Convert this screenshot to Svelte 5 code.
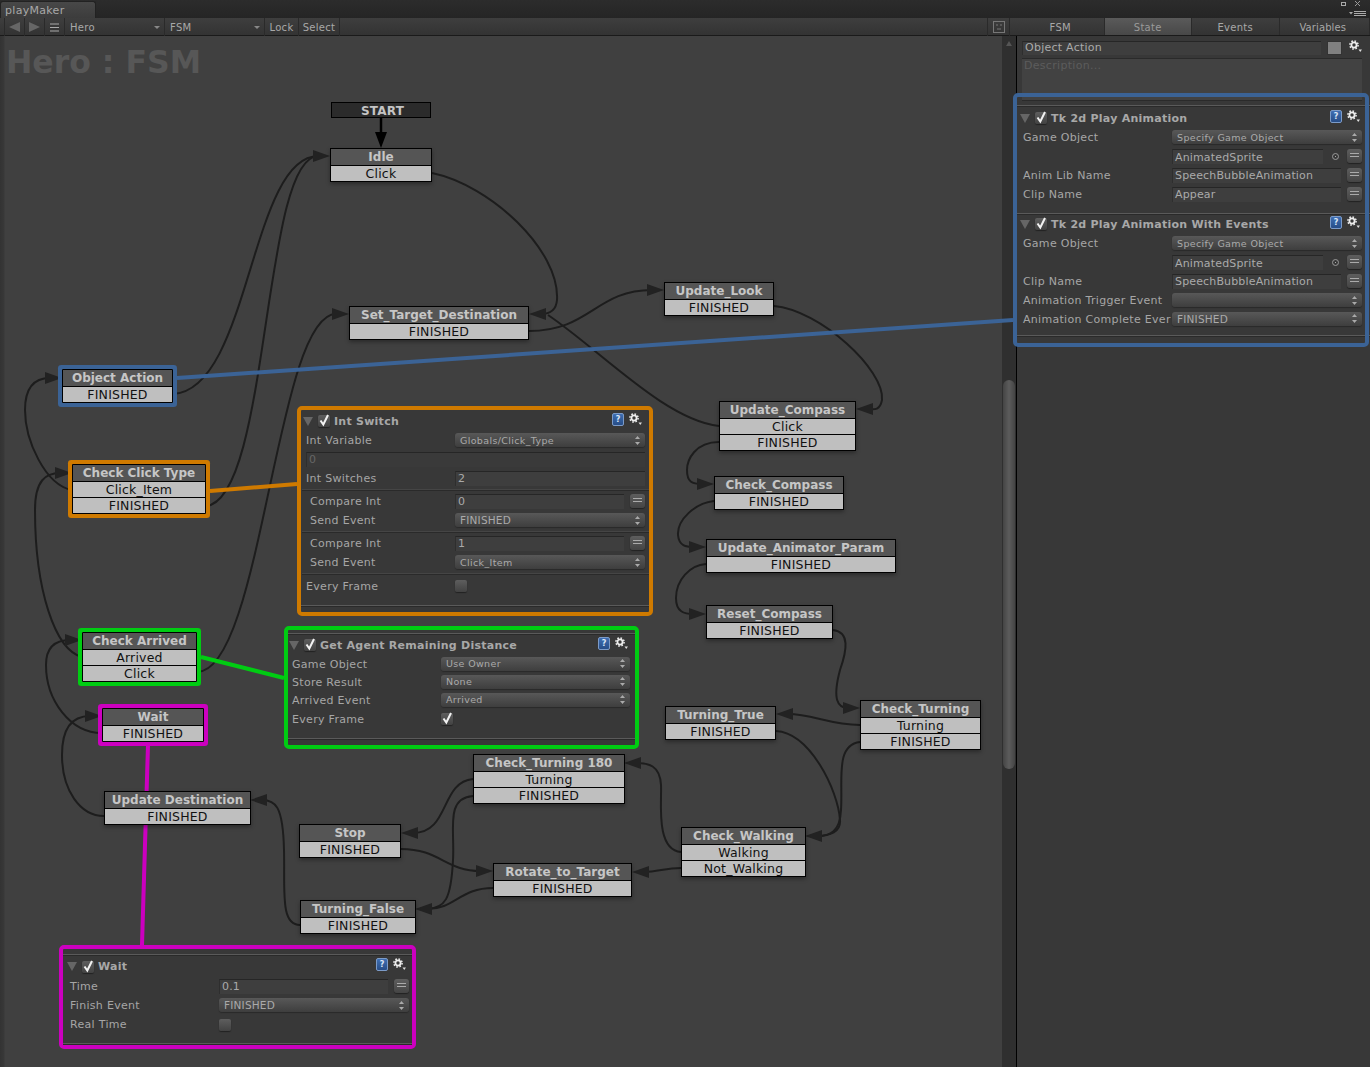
<script>
  const nodes = [
    { n: 'Idle', x: 330, y: 148, w: 102, r: ['Click'] },
    { n: 'Set_Target_Destination', x: 349, y: 306, w: 180, r: ['FINISHED'] },
    { n: 'Update_Look', x: 664, y: 282, w: 110, r: ['FINISHED'] },
    { n: 'Object Action', x: 62, y: 369, w: 111, r: ['FINISHED'], hl: '#3b6396' },
    { n: 'Update_Compass', x: 719, y: 401, w: 137, r: ['Click', 'FINISHED'] },
    { n: 'Check Click Type', x: 72, y: 464, w: 134, r: ['Click_Item', 'FINISHED'], hl: '#cf7a00' },
    { n: 'Check_Compass', x: 714, y: 476, w: 130, r: ['FINISHED'] },
    { n: 'Update_Animator_Param', x: 706, y: 539, w: 190, r: ['FINISHED'] },
    { n: 'Reset_Compass', x: 706, y: 605, w: 127, r: ['FINISHED'] },
    { n: 'Check Arrived', x: 82, y: 632, w: 115, r: ['Arrived', 'Click'], hl: '#00cc12' },
    { n: 'Wait', x: 102, y: 708, w: 102, r: ['FINISHED'], hl: '#cc00c0' },
    { n: 'Update Destination', x: 104, y: 791, w: 147, r: ['FINISHED'] },
    { n: 'Check_Turning 180', x: 473, y: 754, w: 152, r: ['Turning', 'FINISHED'] },
    { n: 'Stop', x: 299, y: 824, w: 102, r: ['FINISHED'] },
    { n: 'Rotate_to_Target', x: 493, y: 863, w: 139, r: ['FINISHED'] },
    { n: 'Turning_False', x: 300, y: 900, w: 116, r: ['FINISHED'] },
    { n: 'Check_Walking', x: 681, y: 827, w: 125, r: ['Walking', 'Not_Walking'] },
    { n: 'Turning_True', x: 665, y: 706, w: 111, r: ['FINISHED'] },
    { n: 'Check_Turning', x: 860, y: 700, w: 121, r: ['Turning', 'FINISHED'] }
  ];

  const curves = [
    'M173 394C250 390 250 157 318 156',
    'M206 506C270 500 262 157 318 156',
    'M197 672C262 672 276 314 336 314',
    'M432 173C490 185 560 250 557 300C556 312 548 314 541 314',
    'M529 331C590 331 596 290 652 290',
    'M719 426C665 420 600 350 548 315',
    'M774 306C820 310 885 370 882 400C880 410 875 410 868 409',
    'M719 442C695 442 687 460 687 470C687 482 692 484 702 484',
    'M714 501C695 503 677 520 678 535C679 546 686 547 694 547',
    'M706 564C690 565 676 580 676 598C676 612 684 614 694 614',
    'M833 630C850 632 847 650 840 670C832 700 838 708 848 708',
    'M860 725C830 725 812 714 788 714',
    'M776 731C810 733 838 790 840 820C841 832 830 836 817 836',
    'M860 742C835 745 843 780 841 810C840 832 830 836 817 836',
    'M681 852C655 850 662 800 661 785C660 765 648 763 636 763',
    'M681 868C665 868 658 872 644 872',
    'M473 779C440 782 450 833 413 833',
    'M473 796C445 798 455 830 453 860C451 900 445 908 427 909',
    'M401 849C440 849 445 871 481 871',
    'M493 888C460 888 455 909 427 909',
    'M300 925C280 925 285 890 284 850C283 805 275 800 262 800',
    'M104 816C80 816 62 790 62 755C62 725 75 716 90 716',
    'M102 733C70 733 46 700 46 665C46 645 58 640 70 640',
    'M82 657C55 650 35 590 35 510C35 480 46 473 60 473',
    'M72 490C45 485 25 440 25 410C25 385 36 378 50 378'
  ];

  // [tip x, tip y, direction]
  const arrows = [
    [330, 156, 1], [349, 314, 1], [529, 314, -1], [664, 290, 1], [856, 409, -1],
    [714, 484, 1], [706, 547, 1], [706, 614, 1], [860, 708, 1], [776, 714, -1],
    [805, 836, -1], [624, 763, -1], [632, 872, -1], [401, 833, -1], [415, 909, -1],
    [493, 871, 1], [250, 800, -1], [102, 716, 1], [82, 640, 1], [72, 473, 1], [62, 378, 1]
  ];
  const arrowPts = (a) => `${a[0]},${a[1]} ${a[0] - a[2] * 17},${a[1] - 6} ${a[0] - a[2] * 17},${a[1] + 6}`;

  const lines = [
    { d: 'M148 745L142 945', c: '#cc00c0' },
    { d: 'M201 657L284 678', c: '#00cc12' },
    { d: 'M210 491L297 484', c: '#cf7a00' },
    { d: 'M177 378L1013 320', c: '#3b6396' }
  ];

  const panels = [
    {
      name: 'Int Switch', x: 297, y: 406, w: 356, h: 210, c: '#cf7a00', pl: 5, pr: 4, hl: 2, gr: 6, top: 1, noTopSep: true,
      rows: [
        { t: 'sel', l: 'Int Variable', v: 'Globals/Click_Type' },
        { t: 'wide', v: '0' },
        { t: 'field', l: 'Int Switches', v: '2' },
        { t: 'sep' },
        { t: 'eq', l: 'Compare Int', v: '0', ind: true },
        { t: 'sel', l: 'Send Event', v: 'FINISHED', ind: true },
        { t: 'sep' },
        { t: 'eq', l: 'Compare Int', v: '1', ind: true },
        { t: 'sel', l: 'Send Event', v: 'Click_Item', ind: true },
        { t: 'sep' },
        { t: 'chk', l: 'Every Frame', on: false, h: 20 }
      ]
    },
    {
      name: 'Get Agent Remaining Distance', x: 284, y: 626, w: 355, h: 123, c: '#00cc12', pl: 4, pr: 5, hl: 1, gr: 6, top: 3,
      rows: [
        { t: 'sel', l: 'Game Object', v: 'Use Owner', h: 18 },
        { t: 'sel', l: 'Store Result', v: 'None', h: 18 },
        { t: 'sel', l: 'Arrived Event', v: 'Arrived', h: 18 },
        { t: 'chk', l: 'Every Frame', on: true, h: 20 }
      ]
    },
    {
      name: 'Wait', x: 59, y: 945, w: 357, h: 104, c: '#cc00c0', pl: 7, pr: 3, hl: 4, gr: 5, top: 5, hh: 21,
      rows: [
        { t: 'eq', l: 'Time', v: '0.1' },
        { t: 'sel', l: 'Finish Event', v: 'FINISHED' },
        { t: 'chk', l: 'Real Time', on: false }
      ]
    }
  ];

  const tk1 = {
    name: 'Tk 2d Play Animation', pl: 6, pr: 8, hl: 3, gr: 9, top: 0,
    rows: [
      { t: 'sel', l: 'Game Object', v: 'Specify Game Object' },
      { t: 'obj', v: 'AnimatedSprite' },
      { t: 'eq', l: 'Anim Lib Name', v: 'SpeechBubbleAnimation' },
      { t: 'eq', l: 'Clip Name', v: 'Appear' }
    ]
  };
  const tk2 = {
    name: 'Tk 2d Play Animation With Events', pl: 6, pr: 8, hl: 3, gr: 9, top: 0,
    rows: [
      { t: 'sel', l: 'Game Object', v: 'Specify Game Object' },
      { t: 'obj', v: 'AnimatedSprite' },
      { t: 'eq', l: 'Clip Name', v: 'SpeechBubbleAnimation' },
      { t: 'sel', l: 'Animation Trigger Event', v: '' },
      { t: 'sel', l: 'Animation Complete Ever', v: 'FINISHED', h: 18 }
    ]
  };
  const isCaps = (v) => v !== '' && v === v.toUpperCase();
</script>

{#snippet gear()}
  <svg class="gear" width="14" height="13" viewBox="0 0 14 13">
    <circle cx="5" cy="5" r="2.6" fill="none" stroke="#eee" stroke-width="1.8" />
    <circle cx="5" cy="5" r="4.1" fill="none" stroke="#eee" stroke-width="1.5" stroke-dasharray="1.6 1.62" />
    <polygon points="9.5,9.5 13,9.5 11.25,12" fill="#ddd" />
  </svg>
{/snippet}

{#snippet tick(on)}
  <span class="check">
    {#if on}
      <svg class="tickmark" width="12" height="13" viewBox="0 0 12 13"><path d="M2.5 6.5L5.3 10.5L10 1" fill="none" stroke="#f2f2f2" stroke-width="2" /></svg>
    {/if}
  </span>
{/snippet}

{#snippet row(r)}
  {#if r.t === 'sep'}
    <div class="sepline small"></div>
  {:else if r.t === 'wide'}
    <div class="row"><span class="field disabled">{r.v}</span></div>
  {:else}
    <div class="row" style={r.h ? `height:${r.h}px` : undefined}>
      {#if r.l !== undefined}
        <span class="label" class:ind={r.ind}>{r.l}</span>
      {:else}
        <span class="label"></span>
      {/if}
      <div class="ctrl">
        {#if r.t === 'sel'}
          <span class="select">
            <span class="sel-text" class:caps={isCaps(r.v)}>{r.v}</span>
            <svg width="5" height="9" viewBox="0 0 5 9"><polygon points="2.5,0 5,3 0,3" fill="#aaa" /><polygon points="0,6 5,6 2.5,9" fill="#aaa" /></svg>
          </span>
        {:else if r.t === 'field'}
          <span class="field">{r.v}</span>
        {:else if r.t === 'eq'}
          <span class="field">{r.v}</span><span class="eq"></span>
        {:else if r.t === 'obj'}
          <span class="field clip">{r.v}</span><span class="dot"></span><span class="eq"></span>
        {:else if r.t === 'chk'}
          {@render tick(r.on)}
        {/if}
      </div>
    </div>
  {/if}
{/snippet}

{#snippet action(a)}
  <div class="head" style="padding-left:{a.hl}px;padding-right:{a.gr}px;height:{a.hh ?? 20}px">
    <svg class="fold" width="10" height="9" viewBox="0 0 10 9"><polygon points="0,0 10,0 5,9" fill="#666" /></svg>
    {@render tick(true)}
    <span class="title">{a.name}</span>
    <span class="help">?</span>
    {@render gear()}
  </div>
  <div class="rows" style="padding-left:{a.pl}px;padding-right:{a.pr}px">
    {#each a.rows as r}
      {@render row(r)}
    {/each}
  </div>
{/snippet}

<div class="window">
  <div class="tabstrip">
    <div class="wintab">playMaker</div>
    <svg class="wincontrols" width="30" height="18" viewBox="0 0 30 18">
      <rect x="1.5" y="2.5" width="4" height="3" fill="none" stroke="#aaa" />
      <path d="M15 1L20 6M20 1L15 6" stroke="#999" fill="none" />
      <polygon points="9,12 13,12 11,14.5" fill="#aaa" />
      <path d="M14 11.5H26M14 13.5H26M14 15.5H26" stroke="#aaa" />
    </svg>
  </div>

  <div class="toolbar">
    <div class="tools">
      <span class="tool tb-w20"><svg width="11" height="10" viewBox="0 0 11 10"><polygon points="0,5 11,0 11,10" fill="#666" /></svg></span>
      <span class="tool tb-w20"><svg width="11" height="10" viewBox="0 0 11 10"><polygon points="11,5 0,0 0,10" fill="#666" /></svg></span>
      <span class="tool tb-w20"><svg width="11" height="9" viewBox="0 0 11 9"><path d="M1 1H10M1 4.5H10M1 8H10" stroke="#aaa" /></svg></span>
      <span class="tool tb-pop tb-w100">Hero<i></i></span>
      <span class="tool tb-pop tb-w100">FSM<i></i></span>
      <span class="tool tb-w34">Lock</span>
      <span class="tool tb-w42">Select</span>
      <span class="tb-gap"></span>
      <span class="tool tb-w23"><svg width="12" height="12" viewBox="0 0 12 12"><rect x="0.5" y="0.5" width="11" height="11" fill="none" stroke="#777" /><path d="M3 4H5M7 4H9M4 8H8" stroke="#777" /></svg></span>
      <span class="tb-end"></span>
    </div>
    <div class="itabs">
      <span class="itab">FSM</span>
      <span class="itab on">State</span>
      <span class="itab">Events</span>
      <span class="itab last">Variables</span>
    </div>
  </div>

  <div class="body">
    <div class="canvas">
      <div class="bigtitle">Hero : FSM</div>

      <svg class="wires" width="1013" height="1031" viewBox="0 36 1013 1031">
        {#each curves as d}
          <path {d} fill="none" stroke="#1d1d1d" stroke-width="2" />
        {/each}
        {#each arrows as a}
          <polygon points={arrowPts(a)} fill="#222" />
        {/each}
        <path d="M381 118V132" stroke="#000" stroke-width="2.5" />
        <polygon points="381,148 375,132 387,132" fill="#000" />
        {#each lines as l}
          <path d={l.d} stroke={l.c} stroke-width="4" fill="none" />
        {/each}
      </svg>

      <div class="start">START</div>

      {#each nodes as s}
        <div class="node" class:lit={s.hl} style="left:{s.x}px;top:{s.y - 36}px;width:{s.w}px;--hl:{s.hl}">
          <div class="ntitle">{s.n}</div>
          {#each s.r as t}
            <div class="nrow">{t}</div>
          {/each}
        </div>
      {/each}

      {#each panels as p}
        <div class="panel" style="left:{p.x}px;top:{p.y - 36}px;width:{p.w}px;height:{p.h}px;border-color:{p.c};padding-top:{p.top}px">
          {#if !p.noTopSep}<div class="sepline top"></div>{/if}
          {@render action(p)}
          <div class="spacer"></div>
          <div class="sepline"></div>
        </div>
      {/each}
    </div>

    <div class="scroll"><div class="scroll-up"></div><div class="thumb"></div></div>

    <aside class="inspector">
      <div class="name-row">
        <span class="field namefield">Object Action</span>
        <span class="swatch"></span>
        {@render gear()}
      </div>
      <div class="desc">Description...</div>
      <div class="sepline first"></div>
      {@render action(tk1)}
      <div class="gap9"></div>
      <div class="sepline"></div>
      {@render action(tk2)}
      <div class="gap8"></div>
      <div class="sepline"></div>
      <div class="bluebox"></div>
    </aside>
  </div>
</div>

<style>
  :global(body) { margin: 0; background: #404040; }
  .window {
    width: 1370px;
    height: 1067px;
    display: flex;
    flex-direction: column;
    overflow: hidden;
    font-family: "DejaVu Sans", sans-serif;
    font-size: 11px;
    letter-spacing: 0.3px;
    color: #aaa;
  }

  .tabstrip {
    height: 18px;
    flex: none;
    display: flex;
    align-items: flex-end;
    background: linear-gradient(#2c2c2c, #252525);
  }
  .wintab {
    width: 96px;
    height: 17px;
    box-sizing: border-box;
    padding-left: 4px;
    line-height: 17px;
    background: linear-gradient(#484848, #3c3c3c);
    border-radius: 3px 3px 0 0;
    border: 1px solid #222;
    border-bottom: 0;
    color: #a8a8a8;
  }
  .wincontrols { margin-left: auto; align-self: flex-start; }

  .toolbar {
    height: 18px;
    flex: none;
    display: flex;
    border-bottom: 1px solid #1a1a1a;
    font-size: 10px;
    background: linear-gradient(#3e3e3e, #333);
    box-sizing: border-box;
  }
  .tools { width: 1017px; flex: none; display: flex; padding-left: 4px; box-sizing: border-box; }
  .tool {
    display: flex;
    align-items: center;
    justify-content: center;
    border-left: 1px solid #2a2a2a;
    box-sizing: border-box;
    height: 18px;
    position: relative;
    color: #a8a8a8;
  }
  .tb-w20 { width: 20px; }
  .tb-w100 { width: 100px; }
  .tb-w34 { width: 34px; }
  .tb-w42 { width: 42px; border-right: 1px solid #2a2a2a; }
  .tb-w23 { width: 23px; border-right: 1px solid #2a2a2a; }
  .tb-gap { flex: 1; }
  .tb-end { width: 7px; }
  .tb-pop { justify-content: flex-start; padding-left: 5px; }
  .tb-pop i {
    position: absolute;
    right: 4px;
    top: 8px;
    border: 3px solid transparent;
    border-top: 3px solid #888;
    border-bottom: 0;
  }
  .itabs { flex: 1; display: flex; }
  .itab {
    flex: 1;
    text-align: center;
    line-height: 20px;
    border-right: 1px solid #2a2a2a;
    color: #a8a8a8;
  }
  .itab.on { background: linear-gradient(#5a5a5a, #484848); color: #9a9a9a; }
  .itab.last { padding-right: 3px; letter-spacing: 0.1px; }

  .body { flex: 1; display: flex; min-height: 0; }
  .canvas {
    width: 1002px;
    flex: none;
    position: relative;
    z-index: 1;
    background: linear-gradient(90deg, #333 0, #383838 4px, #404040 5px);
  }
  .bigtitle {
    position: absolute;
    left: 6px;
    top: 7px;
    font-size: 31.5px;
    font-weight: bold;
    letter-spacing: 0;
    line-height: 38px;
    color: #575757;
    white-space: nowrap;
  }
  .wires { position: absolute; left: 0; top: 0; overflow: visible; pointer-events: none; }

  .start {
    position: absolute;
    left: 331px;
    top: 66px;
    width: 100px;
    height: 16px;
    box-sizing: border-box;
    border: 1px solid #000;
    background: #2b2b2b;
    color: #c4c4c4;
    font-weight: bold;
    font-size: 12px;
    letter-spacing: 0.2px;
    line-height: 17px;
    text-align: center;
    padding-left: 3px;
  }
  .node {
    position: absolute;
    box-sizing: border-box;
    border: 1px solid #000;
    box-shadow: 0 2px 4px rgba(0, 0, 0, 0.35);
    text-align: center;
    white-space: nowrap;
  }
  .node.lit { box-shadow: 0 0 0 4px var(--hl); border-radius: 1px; }
  .ntitle {
    height: 16px;
    line-height: 17px;
    background: #555;
    color: #c6c6c6;
    font-weight: bold;
    font-size: 12px;
    letter-spacing: 0;
  }
  .nrow {
    height: 15px;
    line-height: 15px;
    background: #bfbfbf;
    color: #111;
    font-size: 12.5px;
    letter-spacing: 0.2px;
    border-top: 1px solid #000;
  }

  .panel {
    position: absolute;
    box-sizing: border-box;
    border: 4px solid;
    border-radius: 5px;
    background: #383838;
    display: flex;
    flex-direction: column;
  }
  .spacer { height: 9px; flex: none; }
  .sepline { height: 1px; background: #5a5a5a; border-bottom: 1px solid #2a2a2a; flex: none; box-sizing: content-box; margin-bottom: -1px; }
  .sepline.top { margin-bottom: 0; }
  .sepline.small { height: 1px; background: #454545; margin: 1px -4px 1px; }

  .head {
    display: flex;
    align-items: center;
    flex: none;
  }
  .fold { margin-right: 5px; flex: none; }
  .check {
    width: 12px;
    height: 12px;
    border-radius: 2px;
    background: linear-gradient(#5e5e5e, #424242);
    box-shadow: 0 1px 1px #222;
    display: inline-flex;
    flex: none;
    position: relative;
  }
  .tickmark { position: absolute; left: 0; top: -1px; }
  .head .check { margin-right: 4px; }
  .title { font-weight: bold; font-size: 11px; letter-spacing: 0.25px; color: #a8a8a8; white-space: nowrap; }
  .help {
    margin-left: auto;
    width: 12px;
    height: 13px;
    box-sizing: border-box;
    border: 1px solid #7c9bc8;
    border-radius: 2px;
    background: linear-gradient(#3f6fb3, #274d87);
    color: #dbe6f5;
    font-size: 8px;
    font-weight: bold;
    line-height: 11px;
    text-align: center;
    letter-spacing: 0;
    margin-top: -4px;
    margin-right: 5px;
    flex: none;
  }
  .gear { flex: none; margin-top: -4px; }

  .rows { display: flex; flex-direction: column; flex: none; }
  .row { height: 19px; display: flex; align-items: center; flex: none; }
  .label { width: 149px; flex: none; white-space: nowrap; color: #a6a6a6; }
  .label.ind { padding-left: 4px; box-sizing: border-box; }
  .ctrl { flex: 1; min-width: 0; display: flex; align-items: center; }
  .select {
    flex: 1;
    height: 14px;
    margin-top: -1px;
    box-sizing: border-box;
    border-radius: 3px;
    background: linear-gradient(#585858, #3e3e3e);
    box-shadow: 0 1px 1px #2a2a2a;
    display: flex;
    align-items: center;
    justify-content: space-between;
    padding: 0 5px 0 5px;
    font-size: 9.5px;
    letter-spacing: 0.35px;
    color: #aaa;
  }
  .sel-text { white-space: nowrap; }
  .sel-text.caps { font-size: 10.5px; letter-spacing: 0.2px; }
  .field {
    flex: 1;
    min-width: 0;
    height: 15px;
    line-height: 13px;
    box-sizing: border-box;
    padding-left: 2px;
    background: #3e3e3e;
    border-top: 1px solid #262626;
    border-left: 1px solid #2e2e2e;
    color: #aaa;
    letter-spacing: 0.15px;
    white-space: nowrap;
    overflow: hidden;
  }
  .field.clip { line-height: 16px; }
  .field.disabled { color: #666; background: #3a3a3a; }
  .eq {
    width: 15px;
    height: 14px;
    flex: none;
    margin-left: 6px;
    margin-top: -1px;
    box-sizing: border-box;
    border-radius: 3px;
    background: linear-gradient(#5e5e5e, #444);
    box-shadow: 0 1px 1px #222;
    position: relative;
  }
  .eq::before {
    content: "";
    position: absolute;
    left: 3px;
    right: 3px;
    top: 4px;
    height: 2px;
    border-top: 1px solid #aaa;
    border-bottom: 1px solid #aaa;
  }
  .dot {
    width: 5px;
    height: 5px;
    flex: none;
    margin: 0 8px 0 9px;
    border: 1px solid #999;
    border-radius: 50%;
    box-sizing: content-box;
    position: relative;
  }
  .dot::after {
    content: "";
    position: absolute;
    left: 2px;
    top: 2px;
    width: 1px;
    height: 1px;
    background: #aaa;
  }
  .dot + .eq { margin-left: 0; }

  .scroll {
    width: 14px;
    flex: none;
    background: #2f2f2f;
    border-right: 1px solid #000;
    position: relative;
    box-sizing: content-box;
  }
  .scroll-up {
    position: absolute;
    left: 4px;
    top: 5px;
    border: 3px solid transparent;
    border-bottom: 5px solid #555;
    border-top: 0;
  }
  .thumb {
    position: absolute;
    left: 1px;
    right: 1px;
    top: 344px;
    height: 389px;
    border-radius: 6px;
    background: linear-gradient(90deg, #444, #5c5c5c 50%, #444);
  }

  .inspector {
    flex: 1;
    min-width: 0;
    position: relative;
    background: #383838;
    display: flex;
    flex-direction: column;
  }
  .name-row { height: 20px; display: flex; align-items: center; padding: 3px 8px 0 5px; flex: none; box-sizing: border-box; }
  .namefield { flex: none; width: 299px; height: 14px; line-height: 12px; letter-spacing: 0.25px; }
  .swatch { width: 13px; height: 12px; margin: 0 7px 0 6px; background: #808080; border: 1px solid #333; box-sizing: content-box; flex: none; }
  .name-row .gear { margin-top: -3px; }
  .desc {
    height: 43px;
    flex: none;
    margin: 2px 8px 0 5px;
    box-sizing: border-box;
    padding-left: 2px;
    line-height: 13px;
    background: #424242;
    border-top: 1px solid #2a2a2a;
    border-bottom: 1px solid #2a2a2a;
    color: #5c5c5c;
  }
  .sepline.first { margin-top: 4px; margin-bottom: 1px; }
  .gap9 { height: 9px; flex: none; }
  .gap8 { height: 7px; flex: none; }
  .bluebox {
    position: absolute;
    left: -4px;
    top: 57px;
    width: 356px;
    height: 254px;
    box-sizing: border-box;
    border: 4px solid #3b6396;
    border-radius: 5px;
  }
</style>
